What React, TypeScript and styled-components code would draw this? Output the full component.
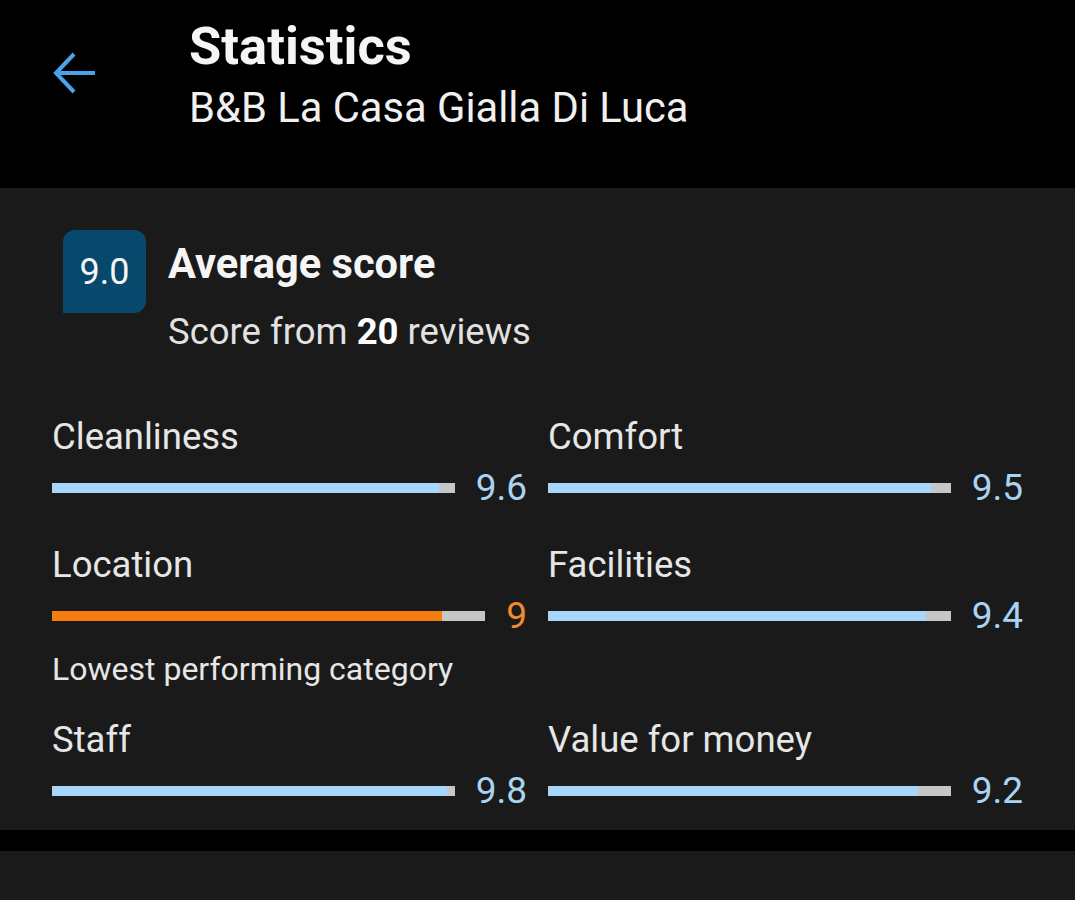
import React from "react";
import styled, { createGlobalStyle } from "styled-components";

const GlobalStyle = createGlobalStyle`
  body {
    margin: 0;
    background: #000000;
    font-family: Roboto, "Liberation Sans", sans-serif;
  }
`;

const Header = styled.div`
  background: #000000;
  height: 188px;
  display: flex;
  align-items: flex-start;
  padding-left: 52px;
  box-sizing: border-box;
`;
const BackBtn = styled.button`
  background: none;
  border: none;
  padding: 0;
  margin-top: 51px;
  width: 44px;
  height: 44px;
  cursor: pointer;
`;
const Titles = styled.div`
  margin-left: 93px;
  padding-top: 16px;
`;
const Title = styled.div`
  color: #f5f5f5;
  font-size: 52.5px;
  font-weight: 700;
  line-height: 60px;
`;
const Subtitle = styled.div`
  color: #f0f0f0;
  font-size: 41.7px;
  line-height: 50px;
  margin-top: 7px;
`;

const Panel = styled.div`
  background: #1a1a1a;
  padding: 42px 52px 18px;
`;
const ScoreHead = styled.div`
  display: flex;
  padding-left: 11px;
`;
const Badge = styled.div`
  width: 83px;
  height: 83px;
  background: #07496d;
  border-radius: 12px 12px 12px 0;
  color: #f5f5f5;
  font-size: 36px;
  display: flex;
  align-items: center;
  justify-content: center;
  flex-shrink: 0;
`;
const HeadText = styled.div`
  margin-left: 22px;
  padding-top: 10px;
`;
const HeadTitle = styled.div`
  color: #f5f5f5;
  font-size: 41.6px;
  font-weight: 700;
  line-height: 48px;
`;
const HeadSub = styled.div`
  color: #e2e2e2;
  font-size: 36.5px;
  line-height: 45px;
  margin-top: 21px;
  b {
    color: #ffffff;
    font-weight: 700;
  }
`;

const Grid = styled.div`
  display: grid;
  grid-template-columns: 1fr 1fr;
  column-gap: 21px;
  row-gap: 35px;
  margin-top: 62px;
`;
const Cell = styled.div`
  display: flex;
  flex-direction: column;
`;
const Label = styled.div`
  color: #e6e6e6;
  font-size: 36.5px;
  line-height: 42px;
`;
const BarRow = styled.div`
  display: flex;
  align-items: center;
  gap: 21px;
  height: 42px;
  margin-top: 9px;
`;
const Track = styled.div`
  flex: 1;
  height: 10px;
  background: #c6c6c6;
  display: flex;
`;
const Fill = styled.div<{ $low?: boolean }>`
  height: 100%;
  background: ${(p) => (p.$low ? "#f57d0f" : "#a6d6fb")};
`;
const Value = styled.div<{ $low?: boolean }>`
  color: ${(p) => (p.$low ? "#f08a2c" : "#a9d3f3")};
  font-size: 37px;
  line-height: 42px;
`;
const Note = styled.div`
  color: #e6e6e6;
  font-size: 32px;
  line-height: 30px;
  margin-top: 17px;
`;

const Divider = styled.div`
  height: 21px;
  background: #000000;
`;
const NextPanel = styled.div`
  background: #1a1a1a;
  height: 60px;
`;

interface CategoryType {
  name: string;
  score: number;
  label: string;
  low?: boolean;
}

const categories: CategoryType[] = [
  { name: "Cleanliness", score: 9.6, label: "9.6" },
  { name: "Comfort", score: 9.5, label: "9.5" },
  { name: "Location", score: 9, label: "9", low: true },
  { name: "Facilities", score: 9.4, label: "9.4" },
  { name: "Staff", score: 9.8, label: "9.8" },
  { name: "Value for money", score: 9.2, label: "9.2" },
];

const App: React.FC = () => {
  return (
    <>
      <GlobalStyle />
      <Header>
        <BackBtn aria-label="Back">
          <svg width="44" height="44" viewBox="0 0 44 44" fill="none">
            <path
              d="M43 22H4M22 3L4 22L22 41"
              stroke="#4aa2ea"
              strokeWidth="4"
              strokeLinecap="butt"
              strokeLinejoin="miter"
            />
          </svg>
        </BackBtn>
        <Titles>
          <Title>Statistics</Title>
          <Subtitle>B&amp;B La Casa Gialla Di Luca</Subtitle>
        </Titles>
      </Header>
      <Panel>
        <ScoreHead>
          <Badge>9.0</Badge>
          <HeadText>
            <HeadTitle>Average score</HeadTitle>
            <HeadSub>
              Score from <b>20</b> reviews
            </HeadSub>
          </HeadText>
        </ScoreHead>
        <Grid>
          {categories.map((c) => (
            <Cell key={c.name}>
              <Label>{c.name}</Label>
              <BarRow>
                <Track>
                  <Fill $low={c.low} style={{ width: `${c.score * 10}%` }} />
                </Track>
                <Value $low={c.low}>{c.label}</Value>
              </BarRow>
              {c.low && <Note>Lowest performing category</Note>}
            </Cell>
          ))}
        </Grid>
      </Panel>
      <Divider />
      <NextPanel />
    </>
  );
};

export default App;
